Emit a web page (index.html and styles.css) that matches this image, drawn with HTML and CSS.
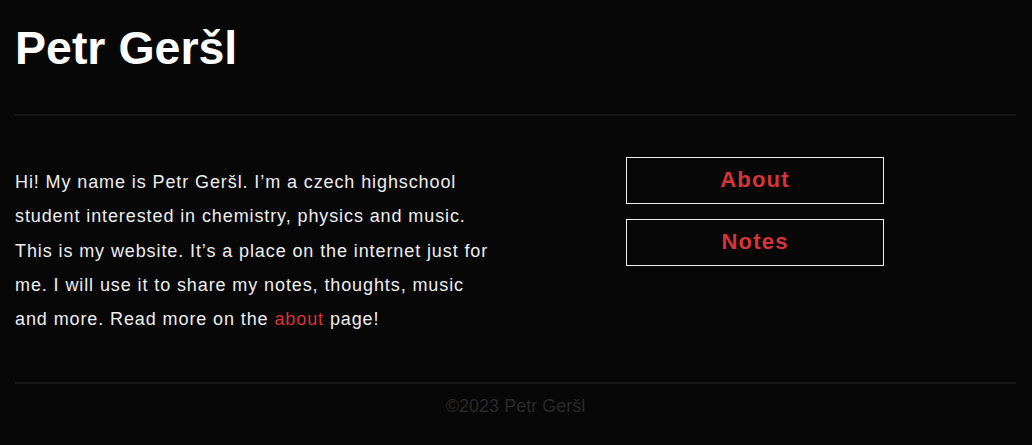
FILE: index.html
```html
<!DOCTYPE html>
<html lang="en">
<head>
<meta charset="utf-8">
<title>Petr Geršl</title>
<link rel="stylesheet" href="styles.css">
</head>
<body>
<header class="site-header">
  <h1 class="site-title">Petr Geršl</h1>
</header>
<main class="content">
  <section class="intro">
    <p>Hi! My name is Petr Geršl. I’m a czech highschool student interested in chemistry, physics and music. This is my website. It’s a place on the internet just for me. I will use it to share my notes, thoughts, music and more. Read more on the <a class="link" href="#">about</a> page!</p>
  </section>
  <nav class="nav">
    <a class="nav-btn" href="#">About</a>
    <a class="nav-btn" href="#">Notes</a>
  </nav>
</main>
<footer class="site-footer">©2023 Petr Geršl</footer>
</body>
</html>
```
FILE: styles.css
```css
html, body {
  margin: 0;
  background: #070707;
}
body {
  padding: 0 16px 0 15px;
  font-family: "Liberation Sans", Arial, sans-serif;
  color: #eeeeee;
}
.site-header {
  padding-top: 21px;
  padding-bottom: 38px;
  border-bottom: 2px solid #161616;
}
.site-title {
  margin: 0;
  font-size: 46.5px;
  line-height: 55px;
  font-weight: bold;
  color: #ffffff;
}
.content {
  display: flex;
  padding-top: 41px;
  padding-bottom: 46px;
  border-bottom: 2px solid #161616;
}
.intro {
  width: 480px;
  flex: none;
}
.intro p {
  margin: 8px 0 0;
  font-size: 18px;
  line-height: 34.3px;
  letter-spacing: 0.9px;
}
.link {
  color: #d8343a;
  text-decoration: none;
}
.nav {
  display: flex;
  flex-direction: column;
  gap: 15px;
  margin-left: 131px;
}
.nav-btn {
  display: block;
  width: 256px;
  height: 45px;
  border: 1px solid #f0f0f0;
  color: #d8343a;
  text-decoration: none;
  text-align: center;
  font-size: 22px;
  font-weight: bold;
  letter-spacing: 1.2px;
  line-height: 44px;
}
.site-footer {
  padding-top: 12px;
  text-align: center;
  font-size: 18px;
  color: #2a2a2a;
}
```
